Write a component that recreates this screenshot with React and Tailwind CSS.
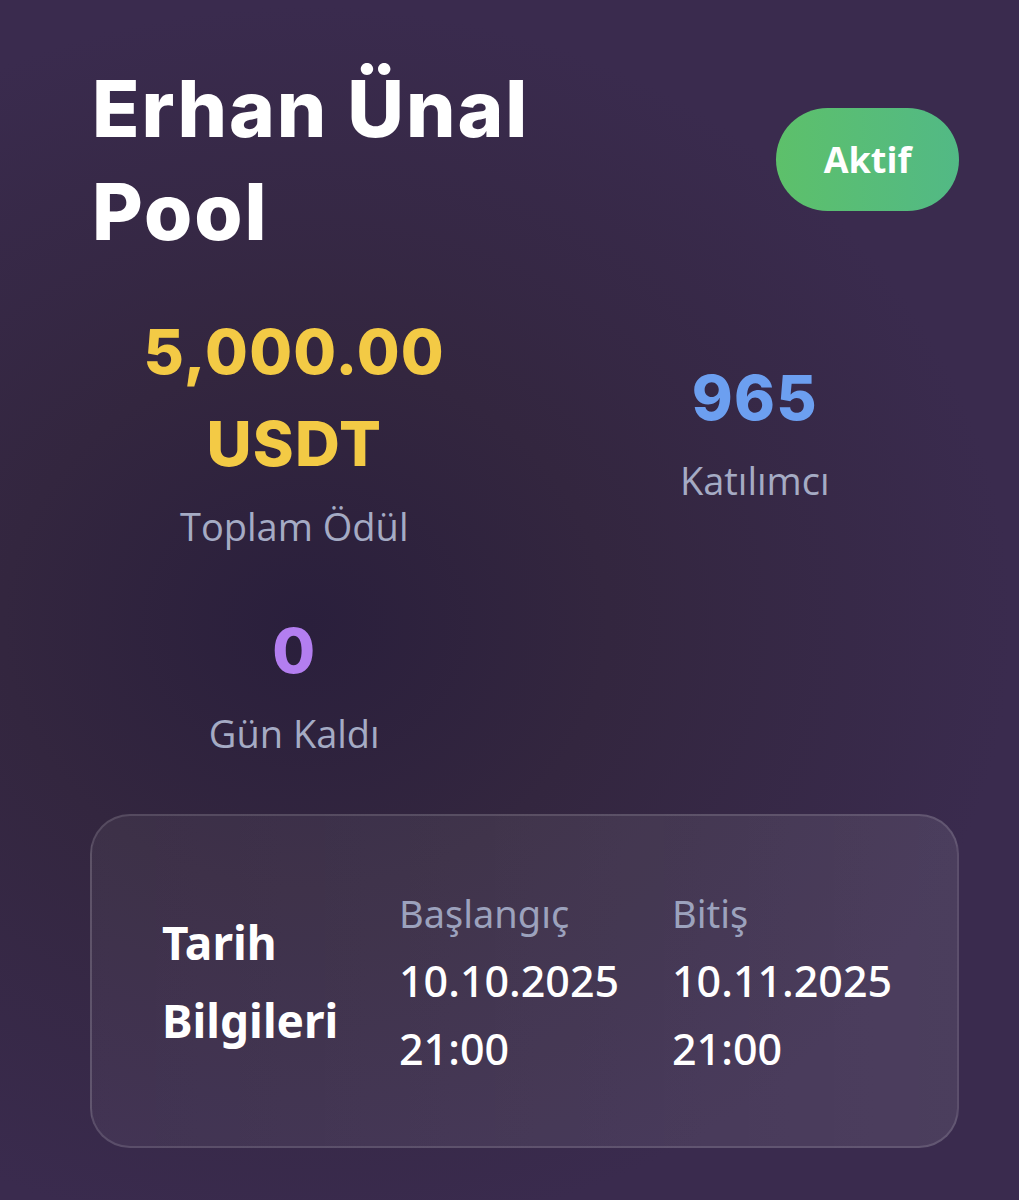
const stats = [
  { lines: ['5,000.00', 'USDT'], label: 'Toplam Ödül', color: 'text-[#f3ca45]' },
  { lines: ['965'], label: 'Katılımcı', color: 'text-[#6c9ff0]' },
  { lines: ['0'], label: 'Gün Kaldı', color: 'text-[#b37ef0]' }
];

const dates = [
  { label: 'Başlangıç', date: '10.10.2025', time: '21:00' },
  { label: 'Bitiş', date: '10.11.2025', time: '21:00' }
];

const Stat = ({ item }) => (
  <div className="flex flex-col items-center text-center">
    <div className={`font-['Inter'] text-[62px] font-extrabold leading-[92px] tracking-[0.02em] ${item.color}`}>
      {item.lines.map((line) => (
        <div key={line}>{line}</div>
      ))}
    </div>
    <div className="mt-3 font-['Open_Sans'] text-[38px] leading-[48px] text-[#a5abc4]">{item.label}</div>
  </div>
);

export default function App() {
  return (
    <div className="min-h-screen bg-[radial-gradient(ellipse_at_30%_52%,#2a1f3c_0%,#33263f_30%,#3a2b4e_70%)] pl-[90px] pr-[60px] pt-[57px] pb-[50px]">
      <div className="flex items-start justify-between pl-[2px]">
        <h1 className="font-['Inter'] text-[78px] font-extrabold leading-[103px] tracking-[0.025em] text-white">
          Erhan Ünal
          <br />
          Pool
        </h1>
        <div className="mt-[51px] flex h-[103px] w-[183px] items-center justify-center rounded-full bg-gradient-to-r from-[#5dc06a] to-[#52b985] font-['Open_Sans'] text-[36px] font-bold text-white">
          Aktif
        </div>
      </div>

      <div className="mt-[43px] grid grid-cols-2 items-center gap-x-[52px] gap-y-[55px]">
        {stats.map((item) => (
          <Stat key={item.label} item={item} />
        ))}
      </div>

      <div className="mt-[57px] flex h-[334px] items-center rounded-[40px] border-2 border-white/[0.13] bg-gradient-to-r from-white/[0.05] to-white/[0.09] pl-[70px]">
        <div className="w-[237px] font-['Noto_Sans'] text-[46px] font-bold leading-[78px] text-white">
          Tarih
          <br />
          Bilgileri
        </div>
        <div className="flex gap-[48px]">
          {dates.map((d) => (
            <div key={d.label} className="w-[225px] font-['Noto_Sans'] leading-[68px]">
              <div className="text-[38px] text-[#9ca2bd]">{d.label}</div>
              <div className="text-[43px] font-medium text-white">{d.date}</div>
              <div className="text-[43px] font-medium text-white">{d.time}</div>
            </div>
          ))}
        </div>
      </div>
    </div>
  );
}
